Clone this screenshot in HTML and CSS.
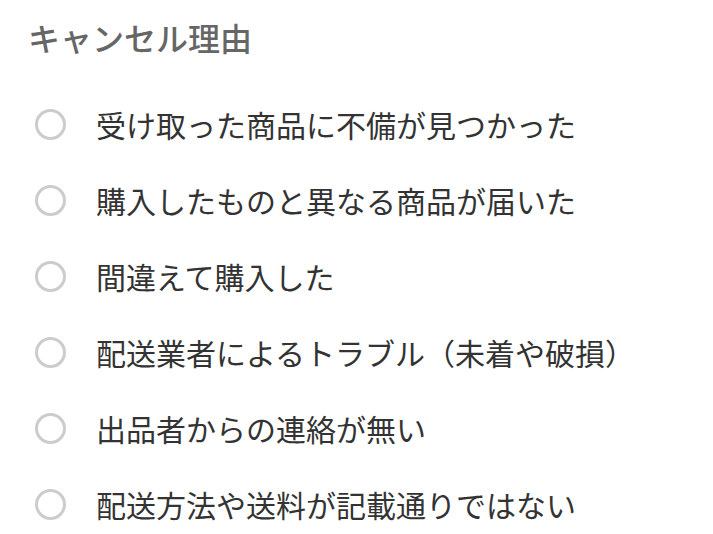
FILE: index.html
```html
<!DOCTYPE html>
<html lang="ja">
<head>
<meta charset="utf-8">
<link rel="stylesheet" href="styles.css">
</head>
<body>
<div class="page">
  <h1 class="title">キャンセル理由</h1>
  <ul class="options">
    <li class="option"><span class="radio"></span><span class="label">受け取った商品に不備が見つかった</span></li>
    <li class="option"><span class="radio"></span><span class="label">購入したものと異なる商品が届いた</span></li>
    <li class="option"><span class="radio"></span><span class="label">間違えて購入した</span></li>
    <li class="option"><span class="radio"></span><span class="label">配送業者によるトラブル（未着や破損）</span></li>
    <li class="option"><span class="radio"></span><span class="label">出品者からの連絡が無い</span></li>
    <li class="option"><span class="radio"></span><span class="label">配送方法や送料が記載通りではない</span></li>
  </ul>
</div>
</body>
</html>
```
FILE: styles.css
```css
html, body {
  margin: 0;
  padding: 0;
  background: #ffffff;
}
body {
  font-family: "Noto Sans CJK JP", "Noto Sans", sans-serif;
}
.page {
  width: 713px;
  height: 534px;
  overflow: hidden;
}
.title {
  margin: 0;
  padding: 15px 0 0 28px;
  height: 86px;
  box-sizing: border-box;
  font-size: 32px;
  line-height: 44px;
  font-weight: 500;
  color: #666666;
}
.options {
  list-style: none;
  margin: 0;
  padding: 0 0 0 35px;
}
.option {
  display: flex;
  align-items: center;
  height: 76px;
  gap: 30px;
}
.radio {
  width: 31px;
  height: 31px;
  box-sizing: border-box;
  border: 3px solid #cccccc;
  border-radius: 50%;
  flex: none;
}
.label {
  font-size: 30px;
  line-height: 40px;
  color: #333333;
}
```
